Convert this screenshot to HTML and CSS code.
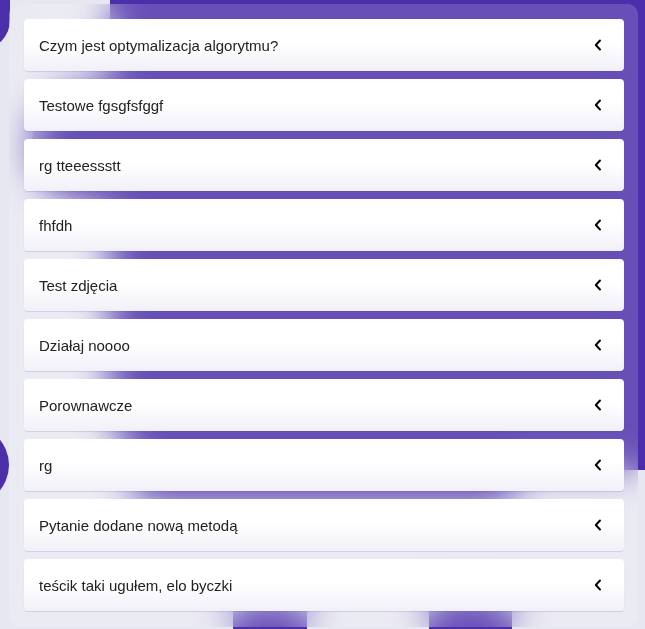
FILE: index.html
```html
<!DOCTYPE html>
<html lang="pl">
<head>
<meta charset="utf-8">
<title>Pytania</title>
<link rel="stylesheet" href="styles.css">
</head>
<body>
<div class="bg" aria-hidden="true">
  <div class="blob blob-tl"></div>
  <div class="blob blob-main"></div>
  <div class="blob blob-mid"></div>
  <div class="blob blob-band"></div>
  <div class="blob blob-left"></div>
  <div class="blob blob-b1"></div>
  <div class="blob blob-b2"></div>
</div>
<main class="panel">
  <div class="item"><span class="label">Czym jest optymalizacja algorytmu?</span><svg class="chev" viewBox="0 0 8 12"><path d="M6 1.5 L1.8 6 L6 10.5"/></svg></div>
  <div class="item"><span class="label">Testowe fgsgfsfggf</span><svg class="chev" viewBox="0 0 8 12"><path d="M6 1.5 L1.8 6 L6 10.5"/></svg></div>
  <div class="item"><span class="label">rg tteeessstt</span><svg class="chev" viewBox="0 0 8 12"><path d="M6 1.5 L1.8 6 L6 10.5"/></svg></div>
  <div class="item"><span class="label">fhfdh</span><svg class="chev" viewBox="0 0 8 12"><path d="M6 1.5 L1.8 6 L6 10.5"/></svg></div>
  <div class="item"><span class="label">Test zdjęcia</span><svg class="chev" viewBox="0 0 8 12"><path d="M6 1.5 L1.8 6 L6 10.5"/></svg></div>
  <div class="item"><span class="label">Działaj noooo</span><svg class="chev" viewBox="0 0 8 12"><path d="M6 1.5 L1.8 6 L6 10.5"/></svg></div>
  <div class="item"><span class="label">Porownawcze</span><svg class="chev" viewBox="0 0 8 12"><path d="M6 1.5 L1.8 6 L6 10.5"/></svg></div>
  <div class="item"><span class="label">rg</span><svg class="chev" viewBox="0 0 8 12"><path d="M6 1.5 L1.8 6 L6 10.5"/></svg></div>
  <div class="item"><span class="label">Pytanie dodane nową metodą</span><svg class="chev" viewBox="0 0 8 12"><path d="M6 1.5 L1.8 6 L6 10.5"/></svg></div>
  <div class="item"><span class="label">teścik taki ugułem, elo byczki</span><svg class="chev" viewBox="0 0 8 12"><path d="M6 1.5 L1.8 6 L6 10.5"/></svg></div>
</main>
</body>
</html>
```
FILE: styles.css
```css
html, body {
  margin: 0;
  padding: 0;
  height: 100%;
}
body {
  background: #e7e7f1;
  font-family: "Liberation Sans", Arial, sans-serif;
  overflow: hidden;
}
.bg {
  position: fixed;
  inset: 0;
  overflow: hidden;
  z-index: 0;
}
.blob {
  position: absolute;
  background: #4a2eaa;
}
.blob-tl {
  left: -50px;
  top: -30px;
  width: 60px;
  height: 80px;
  border-radius: 0 0 30px 30px;
}
.blob-main {
  left: 110px;
  top: -60px;
  width: 620px;
  height: 530px;
  border-bottom-left-radius: 70px;
}
.blob-mid {
  left: 32px;
  top: 85px;
  width: 160px;
  height: 120px;
  border-radius: 60px;
}
.blob-band {
  left: 130px;
  top: 445px;
  width: 390px;
  height: 60px;
  border-radius: 30px;
}
.blob-left {
  left: -80px;
  top: 423px;
  width: 89px;
  height: 84px;
  border-radius: 50%;
}
.blob-b1 {
  left: 233px;
  top: 600px;
  width: 74px;
  height: 80px;
}
.blob-b2 {
  left: 429px;
  top: 595px;
  width: 83px;
  height: 80px;
}
.panel {
  position: relative;
  z-index: 1;
  box-sizing: border-box;
  margin: 4px 7px 0 9px;
  height: 623px;
  padding: 15px 14px 16px 15px;
  border-radius: 10px;
  background: rgba(255, 255, 255, 0.16);
  backdrop-filter: blur(18px);
  -webkit-backdrop-filter: blur(18px);
  display: flex;
  flex-direction: column;
  gap: 8px;
}
.item {
  height: 52px;
  box-sizing: border-box;
  border-radius: 4px;
  background: linear-gradient(to bottom, #ffffff 0%, #ffffff 45%, #f1f0f8 100%);
  box-shadow: 0 1px 1px rgba(90, 80, 160, 0.18);
  display: flex;
  align-items: center;
  justify-content: space-between;
  padding: 0 22px 0 15px;
}
.label {
  font-size: 15px;
  color: #222;
}
.chev {
  width: 8px;
  height: 12px;
  fill: none;
  stroke: #000;
  stroke-width: 1.9;
  stroke-linecap: round;
  stroke-linejoin: round;
}
```
